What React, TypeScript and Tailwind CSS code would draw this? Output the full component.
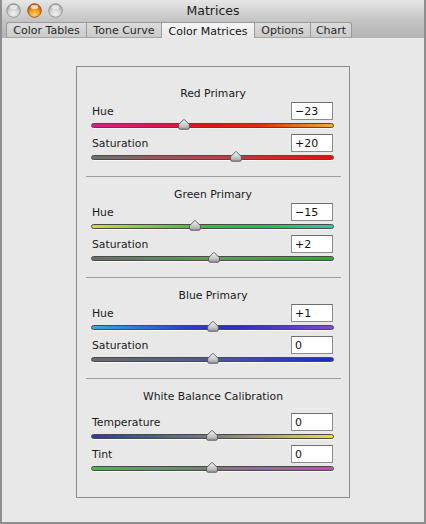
import React from "react";

const TRACK_LEFT = 91;

function Thumb() {
  return (
    <svg width="12" height="11" viewBox="0 0 12 11">
      <defs>
        <linearGradient id="tg" x1="0" y1="0" x2="0" y2="1">
          <stop offset="0" stopColor="#f4f4f4" />
          <stop offset="0.6" stopColor="#c8c8c8" />
          <stop offset="1" stopColor="#9a9a9a" />
        </linearGradient>
      </defs>
      <path
        d="M0.6 5.6 L5.5 0.8 Q6 0.4 6.5 0.8 L11.4 5.6 V8.6 Q11.4 10.2 9.8 10.2 H2.2 Q0.6 10.2 0.6 8.6 Z"
        fill="url(#tg)"
        stroke="#505050"
        strokeWidth="0.9"
      />
    </svg>
  );
}

function Slider({ grad, pos }: { grad: string; pos: number }) {
  return (
    <div className="relative h-[10px] ml-[14px] mr-[15px]">
      <div className={"absolute left-0 right-0 top-[2.5px] h-[5px] rounded-full border border-[#4a4a4a] " + grad} />
      <div className="absolute left-[2px] right-[2px] top-[7.5px] h-[1px] bg-white/80" />
      <div className="absolute top-[-1px]" style={{ left: pos - TRACK_LEFT - 6 }}>
        <Thumb />
      </div>
    </div>
  );
}

function Row({ label, value }: { label: string; value: string }) {
  return (
    <div className="flex items-center justify-between h-[18px] ml-[15px] mr-[16px]">
      <span className="text-[10.8px] text-[#1a1a1a] leading-none pt-[2px]">{label}</span>
      <div className="w-[42px] h-[18px] bg-white border border-[#8c8c8c] border-t-[#6e6e6e] flex items-center pl-[3px] pt-[1px] text-[11px] text-[#111] leading-none">
        {value}
      </div>
    </div>
  );
}

function Heading({ text }: { text: string }) {
  return (
    <div className="h-[16px] flex items-center justify-center pt-[1px] text-[10.8px] text-[#1a1a1a] leading-none">
      {text}
    </div>
  );
}

function Sep() {
  return <div className="h-[1px] bg-[#9c9c9c] ml-[9px] mr-[8px]" />;
}

function TrafficLight({ orange }: { orange?: boolean }) {
  return (
    <svg width="15" height="15" viewBox="0 0 15 15">
      <defs>
        <radialGradient id="grayg" cx="0.5" cy="0.75" r="0.7">
          <stop offset="0" stopColor="#f2f2f2" />
          <stop offset="0.6" stopColor="#cfcfcf" />
          <stop offset="1" stopColor="#9c9c9c" />
        </radialGradient>
        <radialGradient id="orgg" cx="0.5" cy="0.8" r="0.75">
          <stop offset="0" stopColor="#ffd870" />
          <stop offset="0.5" stopColor="#f59a20" />
          <stop offset="1" stopColor="#b04a00" />
        </radialGradient>
      </defs>
      <circle cx="7.5" cy="7.5" r="6.8" fill={orange ? "url(#orgg)" : "url(#grayg)"} stroke={orange ? "#8a4a10" : "#8a8a8a"} strokeWidth="0.8" />
      <ellipse cx="7.5" cy="3.9" rx="3.8" ry="2.1" fill="white" opacity={orange ? 0.7 : 0.6} />
    </svg>
  );
}

const tabs = [
  { name: "Color Tables", w: "w-[80px]" },
  { name: "Tone Curve", w: "w-[75px]" },
  { name: "Color Matrices", w: "w-[93px]", sel: true },
  { name: "Options", w: "w-[56px]" },
  { name: "Chart", w: "w-[42px]" },
];

export default function App() {
  return (
    <div
      className="w-[426px] h-[524px] flex flex-col bg-[#e8e8e8] border-x-2 border-b-2 border-[#8e8e8e] overflow-hidden"
      style={{ fontFamily: '"DejaVu Sans", "Liberation Sans", sans-serif' }}
    >
      <div className="bg-[linear-gradient(to_bottom,#e6e6e6,#c4c4c4_55%,#b4b4b4)]">
        <div className="relative h-[22px] flex items-center justify-center">
          <div className="absolute left-[4px] top-[3px] flex gap-[6px]">
            <TrafficLight />
            <TrafficLight orange />
            <TrafficLight />
          </div>
          <span className="text-[12.5px] text-[#202020] leading-none">Matrices</span>
        </div>
        <div className="h-[16px] flex items-end pl-[4px]">
          {tabs.map((t) => (
            <div
              key={t.name}
              className={
                "h-[16px] flex items-center justify-center pt-[1px] text-[11px] leading-none border-t border-l border-[#9a9a9a] " +
                t.w +
                (t.sel
                  ? " bg-[linear-gradient(to_bottom,#f6f6f6,#e8e8e8)] text-[#111]"
                  : " bg-[linear-gradient(to_bottom,#dcdcdc,#cacaca)] text-[#2a2a2a] border-b border-b-[#a6a6a6]") +
                (t.name === "Color Tables" ? " rounded-tl-[3px]" : "") +
                (t.name === "Chart" ? " border-r rounded-tr-[3px]" : "")
              }
            >
              {t.name}
            </div>
          ))}
        </div>
      </div>

      <div className="flex-1 pt-[28px] pl-[74px]">
        <div className="w-[274px] h-[432px] border border-[#8a8a8a] pt-[19px]">
          <Heading text="Red Primary" />
          <Row label="Hue" value="−23" />
          <Slider grad="bg-[linear-gradient(to_right,#d2208e,#d81818_50%,#dc3010_70%,#eab030)]" pos={184} />
          <div className="h-[4px]" />
          <Row label="Saturation" value="+20" />
          <Slider grad="bg-[linear-gradient(to_right,#707070,#b04848_50%,#e01010)]" pos={236} />
          <div className="h-[14px]" />
          <Sep />
          <div className="h-[10px]" />

          <Heading text="Green Primary" />
          <Row label="Hue" value="−15" />
          <Slider grad="bg-[linear-gradient(to_right,#d2d648,#38c038_45%,#20c050_70%,#30c8a8)]" pos={195} />
          <div className="h-[4px]" />
          <Row label="Saturation" value="+2" />
          <Slider grad="bg-[linear-gradient(to_right,#6a6a6a,#58a058_50%,#18b818)]" pos={214} />
          <div className="h-[14px]" />
          <Sep />
          <div className="h-[10px]" />

          <Heading text="Blue Primary" />
          <Row label="Hue" value="+1" />
          <Slider grad="bg-[linear-gradient(to_right,#3aa8d8,#2840c8_40%,#2830c0_60%,#8848c8)]" pos={213} />
          <div className="h-[4px]" />
          <Row label="Saturation" value="0" />
          <Slider grad="bg-[linear-gradient(to_right,#6c6c6c,#4a5a9a_50%,#1030c8)]" pos={213} />
          <div className="h-[14px]" />
          <Sep />
          <div className="h-[10px]" />

          <Heading text="White Balance Calibration" />
          <div className="h-[8px]" />
          <Row label="Temperature" value="0" />
          <Slider grad="bg-[linear-gradient(to_right,#2040a8,#7a7a80_50%,#e8e040)]" pos={212} />
          <div className="h-[4px]" />
          <Row label="Tint" value="0" />
          <Slider grad="bg-[linear-gradient(to_right,#40c040,#7a7a7a_50%,#c848c8)]" pos={212} />
        </div>
      </div>
    </div>
  );
}
